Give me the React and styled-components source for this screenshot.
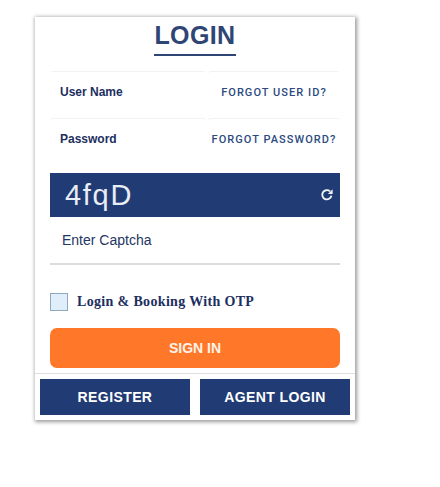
import React from "react";
import styled, { createGlobalStyle } from "styled-components";

const Global = createGlobalStyle`
  html, body { margin: 0; padding: 0; background: #fff; }
  * { box-sizing: border-box; }
`;

const Page = styled.div`
  width: 440px;
  height: 487px;
  padding: 17px 0 0 35px;
  font-family: "Liberation Sans", Arial, sans-serif;
`;

const Card = styled.div`
  width: 320px;
  height: 403px;
  background: #fff;
  box-shadow: 1px 1px 4px 1px rgba(0, 0, 0, 0.4);
  display: flex;
  flex-direction: column;
`;

const Head = styled.div`
  display: flex;
  justify-content: center;
  height: 54px;
`;

const Title = styled.h1`
  margin: 0;
  height: 39px;
  width: 82px;
  font-size: 25px;
  line-height: 37px;
  font-weight: 700;
  letter-spacing: 0.4px;
  text-align: center;
  color: #2f4575;
  border-bottom: 2px solid #2f4575;
`;

const Form = styled.div`
  padding: 0 15px;
`;

const FieldRow = styled.div`
  display: grid;
  grid-template-columns: 156px 132px;
  gap: 2px;
  height: 47px;
`;

const Cell = styled.div`
  border-top: 1px solid #f1f2f4;
  border-radius: 3px 3px 0 0;
  display: flex;
  align-items: center;
  justify-content: ${(p) => (p.$center ? "center" : "flex-start")};
  padding: 0 0 6px ${(p) => (p.$center ? "0" : "10px")};
`;

const Label = styled.span`
  font-size: 12px;
  font-weight: 700;
  color: #1c2f5f;
`;

const Forgot = styled.a`
  font-family: Roboto, "Liberation Sans", sans-serif;
  font-size: 11px;
  font-weight: 500;
  letter-spacing: 1.05px;
  white-space: nowrap;
  color: #2c4a80;
`;

const Captcha = styled.div`
  margin-top: 8px;
  height: 44px;
  background: #213b74;
  display: flex;
  align-items: center;
  justify-content: space-between;
  padding: 0 6px 0 15px;
  color: #fff;
`;

const CaptchaText = styled.span`
  font-size: 29px;
  letter-spacing: 1.7px;
  color: #e9edf5;
`;

const CaptchaInput = styled.div`
  height: 48px;
  border-bottom: 2px solid #dcdcdc;
  display: flex;
  align-items: center;
  padding: 0 0 0 12px;
  font-size: 14px;
  color: #24365f;
`;

const OtpRow = styled.label`
  display: flex;
  align-items: center;
  gap: 9px;
  height: 18px;
  margin-top: 28px;
`;

const Box = styled.span`
  width: 18px;
  height: 18px;
  background: #e0eefb;
  border: 1px solid #8fa9bd;
`;

const OtpText = styled.span`
  font-family: "Liberation Serif", "Times New Roman", serif;
  font-size: 14px;
  font-weight: 700;
  letter-spacing: 0.34px;
  color: #1c2f5f;
`;

const SignIn = styled.button`
  display: block;
  width: 100%;
  height: 40px;
  margin-top: 17px;
  border: 0;
  border-radius: 7px;
  background: #ff7829;
  color: #fdf3ea;
  font-family: "Liberation Sans", Arial, sans-serif;
  font-size: 14px;
  font-weight: 700;
`;

const Footer = styled.div`
  margin-top: 5px;
  border-top: 1px solid #dedede;
  padding: 5px 5px 0;
  display: grid;
  grid-template-columns: 150px 150px;
  gap: 10px;
`;

const NavyButton = styled.button`
  height: 36px;
  border: 0;
  background: #213b74;
  color: #fff;
  font-family: "Liberation Sans", Arial, sans-serif;
  font-size: 14px;
  font-weight: 700;
  letter-spacing: 0.4px;
`;

const RefreshIcon = () => (
  <svg width="14" height="14" viewBox="0 0 14 14" fill="none">
    <path d="M11.4 7.6A4.6 4.6 0 1 1 10 3.4" stroke="#f2f4f8" strokeWidth="1.9" />
    <path d="M12.6 1.2V6H7.9z" fill="#f2f4f8" />
  </svg>
);

export default function App() {
  return (
    <>
      <Global />
      <Page>
        <Card>
          <Head>
            <Title>LOGIN</Title>
          </Head>
          <Form>
            <FieldRow>
              <Cell><Label>User Name</Label></Cell>
              <Cell $center><Forgot>FORGOT USER ID?</Forgot></Cell>
            </FieldRow>
            <FieldRow>
              <Cell><Label>Password</Label></Cell>
              <Cell $center><Forgot>FORGOT PASSWORD?</Forgot></Cell>
            </FieldRow>
            <Captcha>
              <CaptchaText>4fqD</CaptchaText>
              <RefreshIcon />
            </Captcha>
            <CaptchaInput>Enter Captcha</CaptchaInput>
            <OtpRow>
              <Box />
              <OtpText>Login &amp; Booking With OTP</OtpText>
            </OtpRow>
            <SignIn>SIGN IN</SignIn>
          </Form>
          <Footer>
            <NavyButton>REGISTER</NavyButton>
            <NavyButton>AGENT LOGIN</NavyButton>
          </Footer>
        </Card>
      </Page>
    </>
  );
}
